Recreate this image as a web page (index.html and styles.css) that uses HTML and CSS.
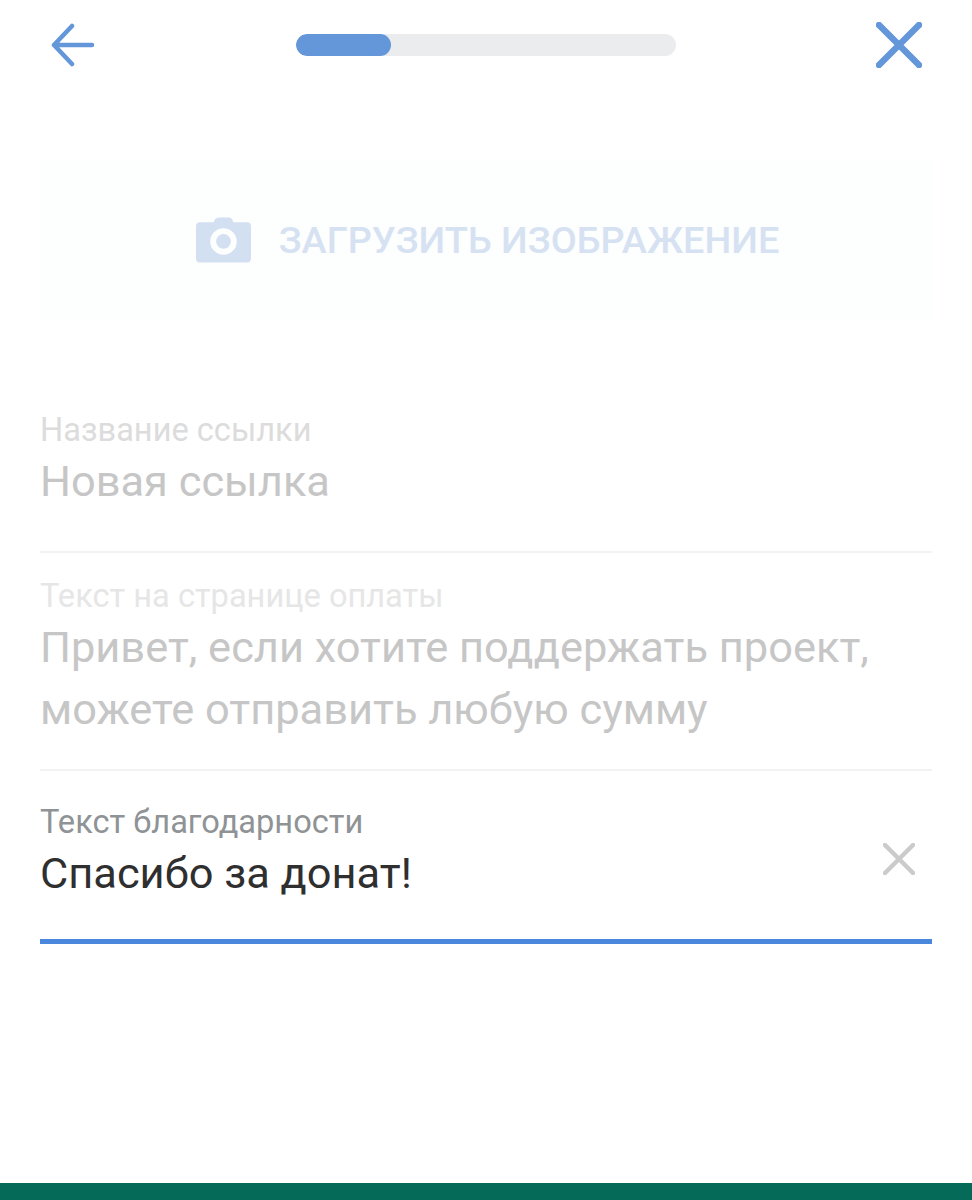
FILE: index.html
```html
<!DOCTYPE html>
<html lang="ru">
<head>
<meta charset="utf-8">
<title>Новая ссылка</title>
<link rel="stylesheet" href="styles.css">
</head>
<body>
<div class="page">
  <header class="topbar">
    <svg class="icon-back" viewBox="0 0 44 44" fill="none"><path d="M3 22H41M21 3L3 22L21 41" stroke="#6496da" stroke-width="4.500" stroke-linecap="round" stroke-linejoin="round"/></svg>
    <div class="progress"><div class="progress-fill"></div></div>
    <svg class="icon-close" viewBox="0 0 46 46" fill="none"><path d="M3 3L43 43M43 3L3 43" stroke="#6496da" stroke-width="6.500" stroke-linecap="round"/></svg>
  </header>
  <main class="form">
    <div class="upload">
      <svg class="icon-camera" viewBox="0 0 56 46"><path fill-rule="evenodd" fill="#d3e0f1" d="M18 5Q19 0 24 0H33Q37 0 38 5H52Q56 5 56 9V41Q56 46 52 46H4Q0 46 0 41V9Q0 5 4 5ZM28 11A13.500 13.500 0 1 0 28 38A13.500 13.500 0 1 0 28 11ZM28 17A7.500 7.500 0 1 1 28 32A7.500 7.500 0 1 1 28 17Z"/></svg>
      <span class="upload-text">ЗАГРУЗИТЬ ИЗОБРАЖЕНИЕ</span>
    </div>
    <div class="field field-name">
      <div class="label label-a">Название ссылки</div>
      <div class="value value-muted">Новая ссылка</div>
    </div>
    <div class="field field-pay">
      <div class="label label-b">Текст на странице оплаты</div>
      <div class="value value-muted">Привет, если хотите поддержать проект, можете отправить любую сумму</div>
    </div>
    <div class="field field-thanks">
      <div class="thanks-main">
        <div class="label label-c">Текст благодарности</div>
        <div class="value value-active">Спасибо за донат!</div>
      </div>
      <svg class="icon-clear" viewBox="0 0 32 32" fill="none"><path d="M2 2L30 30M30 2L2 30" stroke="#cbcbcb" stroke-width="4.500" stroke-linecap="round"/></svg>
    </div>
  </main>
  <div class="footer-bar"></div>
</div>
</body>
</html>
```
FILE: styles.css
```css
html, body { margin: 0; padding: 0; background: #fff; }
.page {
  height: 1200px;
  display: flex;
  flex-direction: column;
  overflow: hidden;
  font-family: Roboto, "Noto Sans", sans-serif;
}
.topbar {
  height: 90px;
  padding: 0 50px 0 51px;
  display: flex;
  align-items: center;
  justify-content: space-between;
  box-sizing: border-box;
}
.icon-back { width: 44px; height: 44px; flex: none; }
.icon-close { width: 46px; height: 46px; flex: none; }
.progress {
  width: 380px;
  height: 22px;
  border-radius: 11px;
  background: #eaeced;
  overflow: hidden;
}
.progress-fill { width: 95px; height: 100%; border-radius: 11px; background: #6496da; }
.form { padding: 70px 40px 0; }
.upload {
  height: 160px;
  padding-left: 3px;
  box-sizing: border-box;
  background: #fdfefe;
  display: flex;
  align-items: center;
  justify-content: center;
  gap: 28px;
}
.icon-camera { width: 55px; height: 46px; flex: none; }
.upload-text { font-size: 37.800px; font-weight: 500; color: #d6e2f2; white-space: nowrap; }
.field { box-sizing: border-box; }
.label { font-size: 32.600px; line-height: 36px; margin-bottom: 3px; }
.label-a { color: #dcdcdc; }
.label-b { color: #e6e6e6; }
.label-c { color: #8f9396; }
.value { font-size: 43.400px; line-height: 62px; }
.value-muted { color: #c6c6c6; }
.value-active { color: #2f2f2f; }
.field-name { margin-top: 92px; height: 141px; border-bottom: 2px solid #f2f2f2; }
.field-pay { padding-top: 25px; height: 218px; border-bottom: 2px solid #f2f2f2; }
.field-thanks {
  padding-top: 33px;
  height: 173px;
  border-bottom: 5px solid #4a88de;
  display: flex;
  justify-content: space-between;
  align-items: flex-start;
}
.icon-clear { width: 32px; height: 32px; margin: 39px 17px 0 0; flex: none; }
.footer-bar { margin-top: auto; height: 17px; background: #066a58; }
```
